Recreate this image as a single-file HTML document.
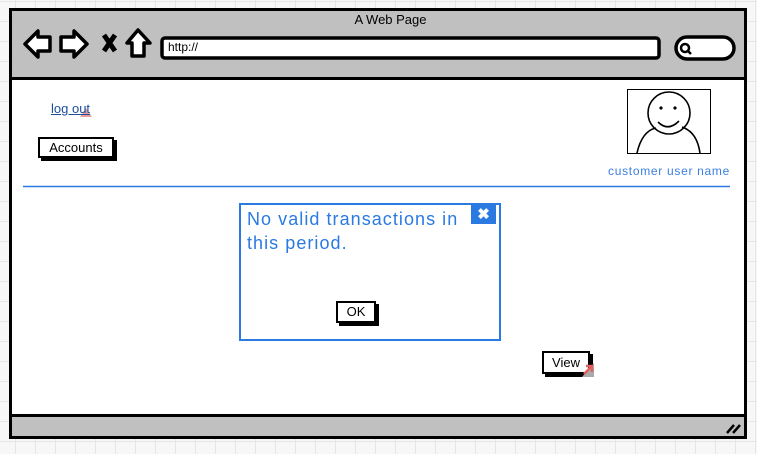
<!DOCTYPE html>
<html><head><meta charset="utf-8"><style>
*{margin:0;padding:0;box-sizing:border-box}
body{width:757px;height:454px;overflow:hidden;position:relative;font-family:"Liberation Sans",sans-serif;
background-color:#f7f7f7;background-image:linear-gradient(#e6e6e6 1px,transparent 1px),linear-gradient(90deg,#e6e6e6 1px,transparent 1px);background-size:20px 20px;background-position:-5px 1px}
.a{position:absolute}
.btn{position:absolute;background:#fff;border:2px solid #000;box-shadow:3px 3px 0 #000;font-size:13px;text-align:center;color:#000}
</style></head><body>
<div class="a" style="left:9px;top:8px;width:738px;height:431px;background:#fff;border:3px solid #000;"></div>
<div class="a" style="left:12px;top:11px;width:732px;height:69px;background:#c0c0c0;border-bottom:3px solid #000;"></div>
<div class="a" style="left:12px;top:414px;width:732px;height:22px;background:#c0c0c0;border-top:3px solid #000;"></div>
<div class="a" style="left:0;top:12px;width:757px;text-align:center;font-size:13px;padding-left:24px;color:#000">A Web Page</div>
<svg class="a" style="left:0;top:0" width="757" height="454">
<g fill="#fff" stroke="#000" stroke-width="3.5" stroke-linejoin="round">
<path d="M25 44 L38 31 L38 37 L50 37 L50 51 L38 51 L38 57 Z"/>
<path d="M87 44 L74 31 L74 37 L61 37 L61 51 L74 51 L74 57 Z"/>
<path d="M138 30 L127 43 L132 43 L132 56 L144 56 L144 43 L150 43 Z"/>
<rect x="162" y="38" width="497" height="20" rx="3"/>
<rect x="676" y="37" width="58" height="22" rx="11"/>
</g>
<path d="M104 35 L115 51 M115 35 L104 51" stroke="#000" stroke-width="5"/>
<circle cx="685" cy="48" r="4" fill="none" stroke="#000" stroke-width="2.5"/><path d="M688 51 L691 54" stroke="#000" stroke-width="2.5"/>
<path d="M727 433 L734 425 M733 433 L740 425" stroke="#000" stroke-width="2.5"/>
<line x1="23" y1="186.5" x2="730" y2="186.5" stroke="#2a7ae2" stroke-width="1.5"/>
<rect x="627.5" y="89.5" width="83" height="64" fill="#fff" stroke="#000"/>
<circle cx="669" cy="113" r="21" fill="none" stroke="#000" stroke-width="1.6"/>
<circle cx="661" cy="108" r="1.6"/><circle cx="675" cy="108" r="1.6"/>
<path d="M658 122 Q668 132 679 121" fill="none" stroke="#000" stroke-width="1.6"/>
<path d="M637 153 Q642 131 656 128 M682 127 Q697 132 700 153" fill="none" stroke="#000" stroke-width="1.6"/>
<path d="M80 117 L86 108 L92 117 Z" fill="#e07070" opacity="0.7"/>
</svg>
<div class="a" style="left:168px;top:40px;font-size:12px;color:#000">http://</div>
<div class="a" style="left:51px;top:101px;font-size:13px;color:#1a4f9c;text-decoration:underline">log out</div>
<div class="btn" style="left:38px;top:137px;width:76px;height:21px;line-height:17px">Accounts</div>
<div class="a" style="right:27px;top:164px;font-size:12px;color:#3a7ee0;letter-spacing:0.7px">customer user name</div>
<div class="a" style="left:239px;top:203px;width:262px;height:138px;border:2px solid #2a7ae2;background:#fff"></div>
<div class="a" style="left:471px;top:205px;width:25px;height:19px;background:#2a7ae2;color:#fff;font-weight:bold;font-size:15px;text-align:center;line-height:19px">✖</div>
<div class="a" style="left:247px;top:207px;font-size:18px;line-height:24px;color:#2a7ae2;letter-spacing:1.05px">No valid transactions in<br>this period.</div>
<div class="btn" style="left:336px;top:301px;width:40px;height:22px;line-height:18px">OK</div>
<div class="btn" style="left:542px;top:351px;width:48px;height:23px;line-height:19px">View</div>
<svg class="a" style="left:582px;top:361px" width="13" height="16"><path d="M0 16 L12 16 L12 2 Z" fill="#aaa"/><path d="M2 13 L10 5 M4 5 L10 5 L10 11" stroke="#e06060" stroke-width="2.5" fill="none"/></svg>
</body></html>
